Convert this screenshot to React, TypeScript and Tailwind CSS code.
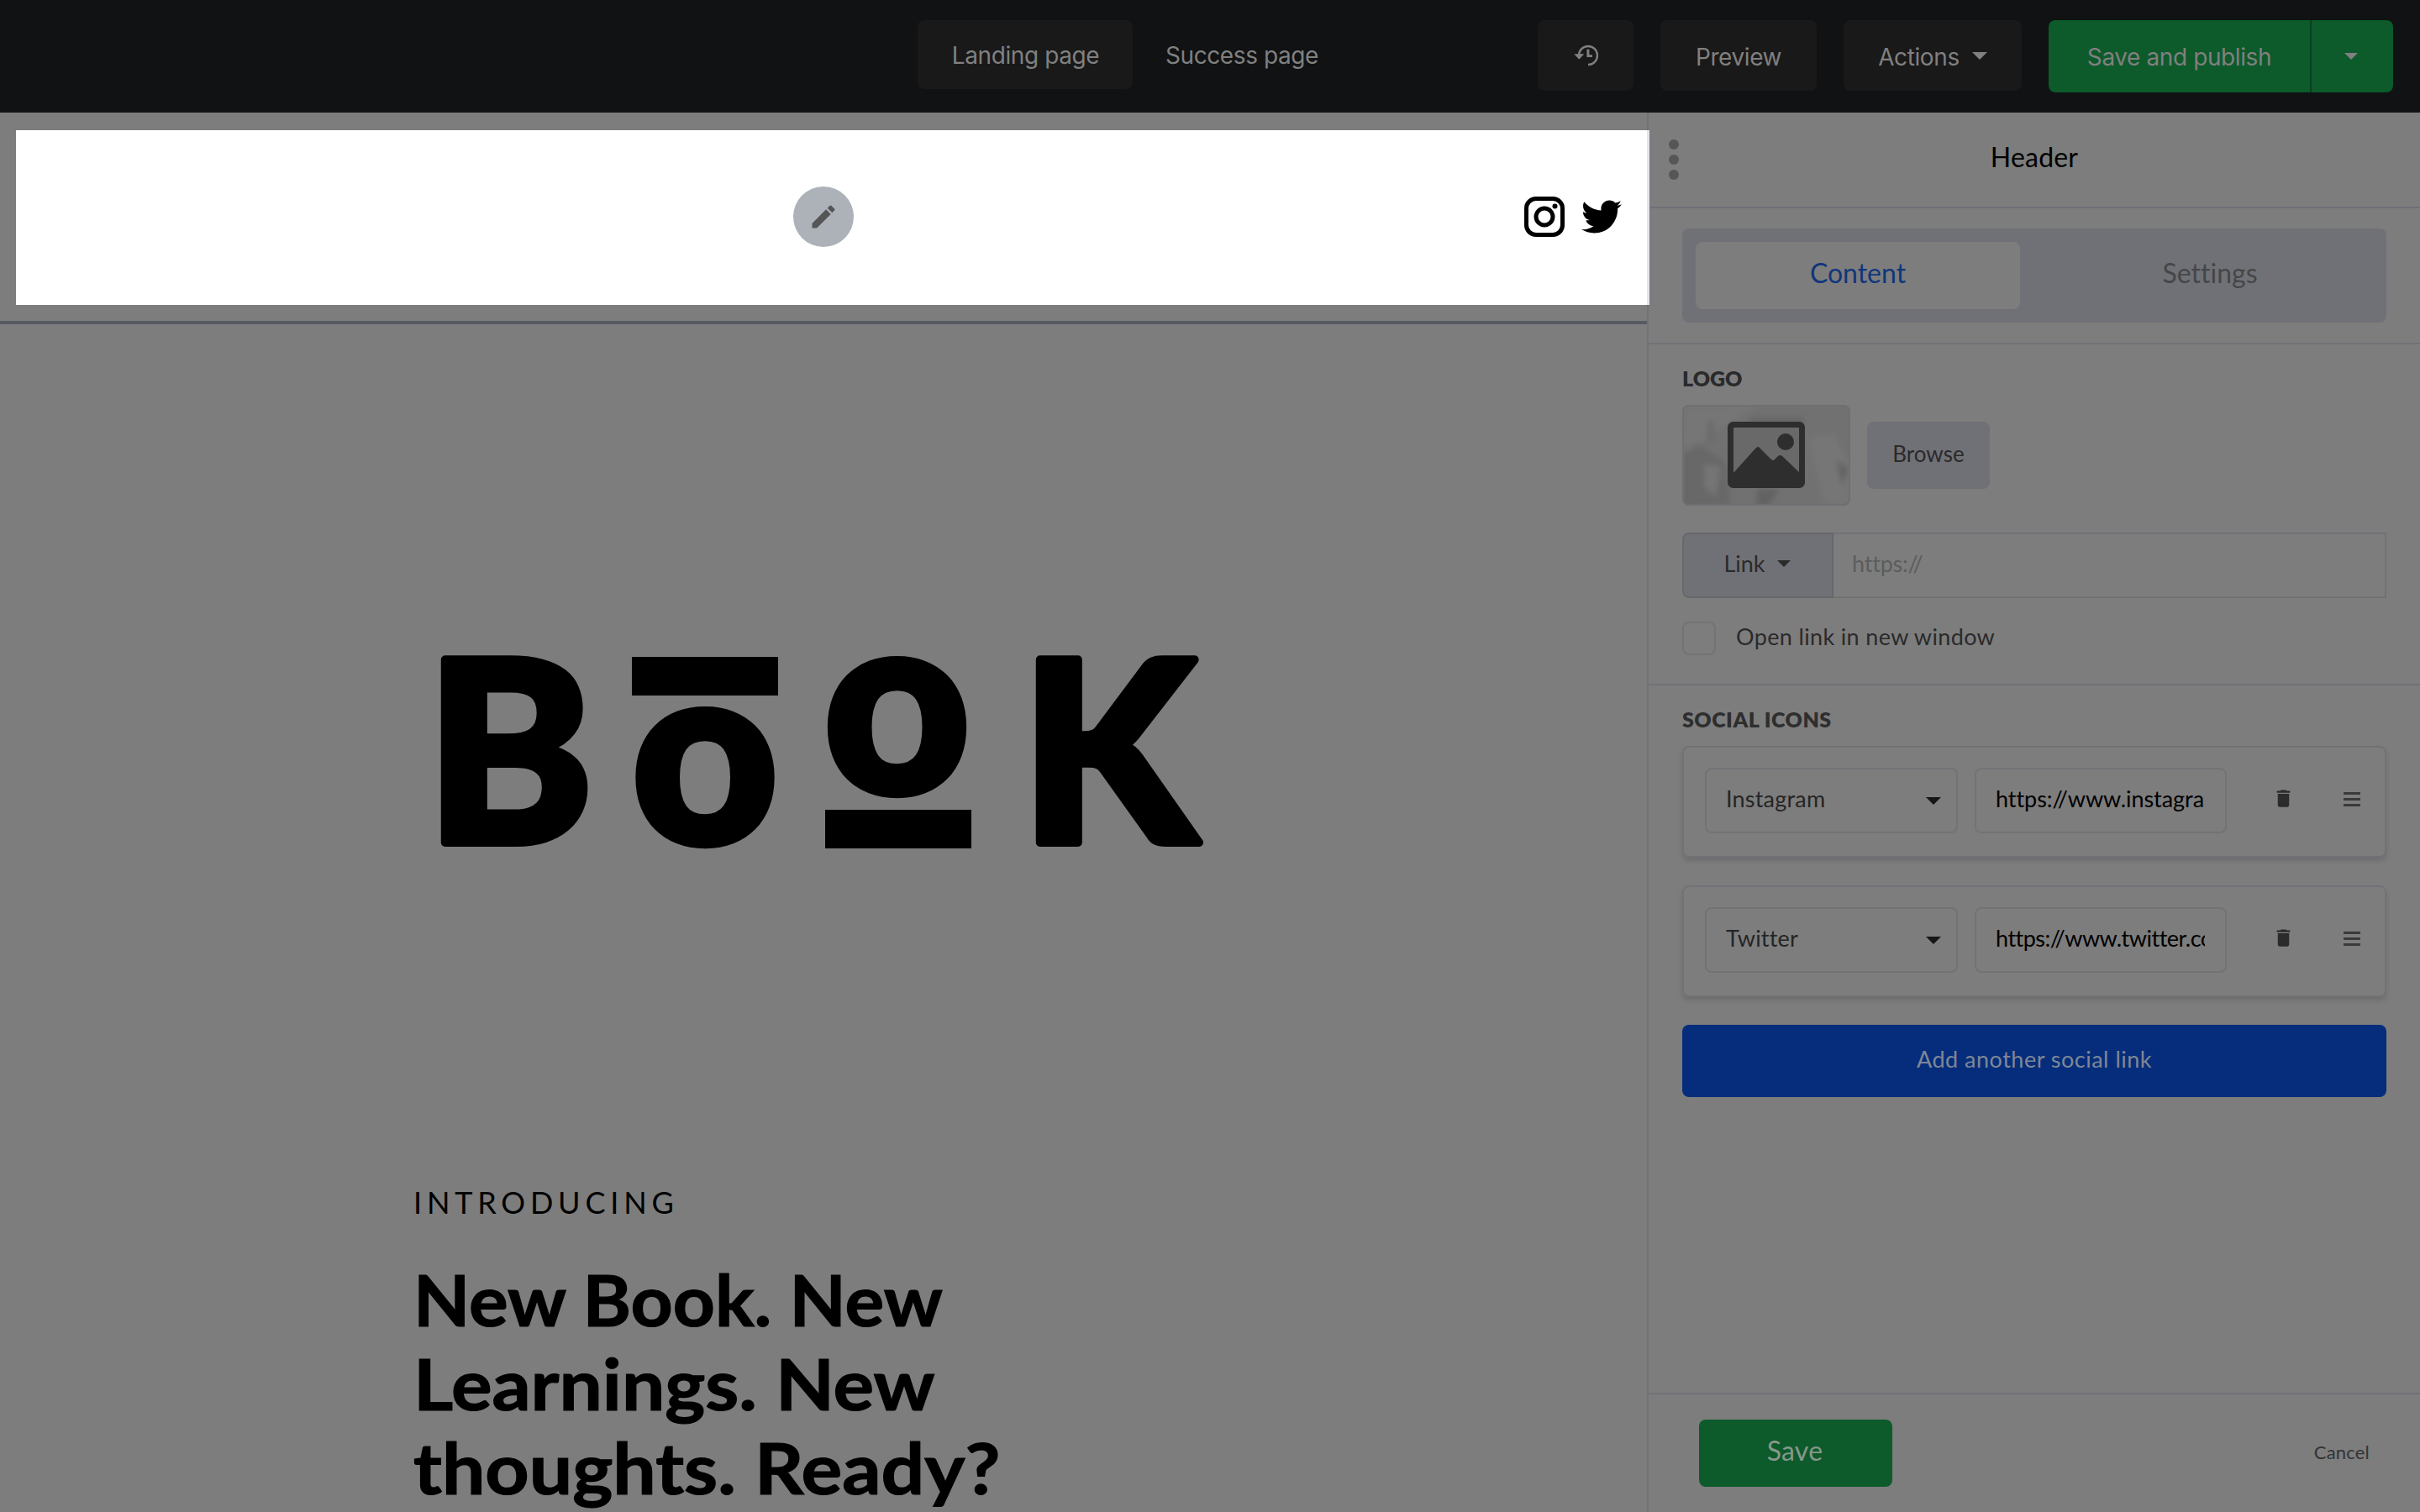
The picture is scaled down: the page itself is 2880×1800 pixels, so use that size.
import React from "react";
import { MdDelete, MdEdit } from "react-icons/md";
import { FaTwitter } from "react-icons/fa";

const socialLinks = [
  { name: "Instagram", url: "https://www.instagra", spacing: "tracking-[-0.05px]" },
  { name: "Twitter", url: "https://www.twitter.co", spacing: "tracking-[-0.5px]" },
];

const Caret = ({ className }: { className: string }) => (
  <svg viewBox="0 0 18 9" className={className} fill="currentColor" preserveAspectRatio="none">
    <path d="M0 0h18l-9 9z" />
  </svg>
);

const HistoryIcon = () => (
  <svg viewBox="0 0 29 26" className="h-[26px] w-[29px]" fill="currentColor">
    <path d="M6 13a11 11 0 1 1 11 11" fill="none" stroke="currentColor" strokeWidth="2.4" />
    <path d="M.3 11.3h12l-6 6.4z" />
    <path d="M15.4 5.7h3v6.5H22V15h-6.6z" />
  </svg>
);

const InstagramIcon = () => (
  <svg viewBox="0 0 48 48" className="mb-0.5 size-12" fill="none" stroke="#000">
    <rect x="2.5" y="2.5" width="43" height="43" rx="11.5" strokeWidth="5" />
    <circle cx="24" cy="24" r="10" strokeWidth="5" />
    <circle cx="36.5" cy="11.5" r="3" fill="#000" stroke="none" />
  </svg>
);

const TopBar = () => (
  <header className="flex h-[134px] shrink-0 items-start bg-[#101213] pt-6 pr-8 font-['Inter',sans-serif] text-[28px] tracking-[-0.4px] text-[#808080]">
    <nav className="ml-[1092px] flex h-[82px]">
      <a className="flex w-64 items-center justify-center rounded-lg bg-[#191919] pt-0.5 pl-px">
        Landing page
      </a>
      <a className="flex w-64 items-center justify-center pt-0.5 pl-1">Success page</a>
    </nav>
    <div className="ml-auto flex h-[86px]">
      <button className="mr-8 flex h-[84px] w-[114px] items-center justify-center rounded-lg bg-[#191919]">
        <HistoryIcon />
      </button>
      <button className="mr-8 h-[84px] w-[186px] rounded-lg bg-[#191919] pt-1">
        Preview
      </button>
      <button className="mr-8 flex h-[84px] w-[212px] items-center justify-center gap-[15px] rounded-lg bg-[#191919] pt-1">
        Actions
        <Caret className="mb-1 h-[9px] w-[18px]" />
      </button>
      <button className="w-[311px] rounded-l-lg bg-[#0d5a2b] pt-0.5">Save and publish</button>
      <button className="flex w-[99px] items-center justify-center rounded-r-lg border-l-2 border-[#0a3f20] bg-[#0d5a2b] pr-1">
        <Caret className="h-2 w-4" />
      </button>
    </div>
  </header>
);

const BookLogo = () => (
  <svg
    viewBox="0 0 912 228"
    className="ml-[524px] h-[228px] w-[912px] overflow-visible font-['Lato',sans-serif] text-[300px] font-black"
    stroke="#000"
    strokeWidth="10"
    strokeLinejoin="round"
  >
    <text x="-17" y="221">B</text>
    <text x="315" y="221" textAnchor="middle">o</text>
    <text x="543.5" y="161" textAnchor="middle">o</text>
    <text x="691" y="221">K</text>
    <g stroke="none">
      <rect x="228" width="174" height="46" />
      <rect x="458" y="182" width="174" height="46" />
    </g>
  </svg>
);

const Canvas = () => (
  <main className="flex w-[1960px] shrink-0 flex-col overflow-visible text-black">
    <section className="h-[252px] shrink-0 border-b-4 border-[#565b61] pt-[21px] pl-[19px]">
      <div className="relative z-10 flex h-[208px] w-[1944px] items-center justify-end gap-5 border-r-[3px] border-[#e4e4ec] bg-white pr-[30px]">
        <button className="absolute top-[67px] left-[925px] flex size-[72px] items-center justify-center rounded-full bg-[#adb2b9] text-[#555]">
          <MdEdit className="size-9" />
        </button>
        <InstagramIcon />
        <FaTwitter className="mb-0.5 size-12" />
      </div>
    </section>
    <section className="pt-[396px]">
      <BookLogo />
      <div className="ml-[492px] w-[720px] pt-[396px] font-['Lato',sans-serif]">
        <p className="text-4xl leading-[50px] tracking-[5.8px]">INTRODUCING</p>
        <h1 className="mt-10 flex flex-col items-start text-[85px] leading-[100px] font-bold whitespace-nowrap [-webkit-text-stroke:1.2px_#000]">
          <span className="origin-left scale-x-[1.028]">New Book. New</span>
          <span className="origin-left scale-x-[1.07]">Learnings. New</span>
          <span className="origin-left scale-x-[1.073]">thoughts. Ready?</span>
        </h1>
      </div>
    </section>
  </main>
);

const Thumbnail = () => (
  <svg viewBox="0 0 200 120" className="h-[120px] w-[200px]">
    <defs>
      <clipPath id="thumb">
        <rect width="200" height="120" rx="8" />
      </clipPath>
      <filter id="soft">
        <feGaussianBlur stdDeviation="3" />
      </filter>
    </defs>
    <g clipPath="url(#thumb)">
      <rect width="200" height="120" fill="#717171" />
      <g filter="url(#soft)">
        <path d="M0 0h90L20 45 0 50z" fill="#767676" />
        <path d="M80 14h64v14H80zM0 60l20-12 32 20 6 52H0z" fill="#686868" />
        <path d="M26 70l20 4-6 36-14-12z" fill="#747474" />
        <path d="M150 40l30-6 20 40v46h-30z" fill="#767676" />
        <path d="M184 66l14 10-8 20zM90 100h26l-14 20H88z" fill="#626262" />
        <path d="M30 20h8v24h-8z" fill="#6b6b6b" />
      </g>
      <path d="M58 24h86v60H58z" fill="#696969" />
    </g>
    <rect x="1" y="1" width="198" height="118" rx="7" fill="none" stroke="#6e6f73" strokeWidth="2" />
    <rect x="57.5" y="23.5" width="85" height="72" rx="3" fill="none" stroke="#2e2e2e" strokeWidth="7" />
    <circle cx="123" cy="44" r="10" fill="#2e2e2e" />
    <path
      d="M60 96V82L87 52q3-4 6 0l13 13q2 2 4 0l4-4q2-2 5 0l22 21v14z"
      fill="#2e2e2e"
    />
  </svg>
);

const SocialCard = ({ name, url, spacing }: { name: string; url: string; spacing: string }) => (
  <div className="mb-[33px] flex h-[133px] rounded-lg border-2 border-[#717276] pt-6 pl-[25px] shadow-[0_4px_6px_rgba(0,0,0,0.13)]">
    <div className="flex h-[78px] w-[301px] items-center justify-between rounded-lg border-2 border-[#727376] pr-[18px] pb-1 pl-[23px] text-[27px] tracking-[0.2px] text-[#252525]">
      {name}
      <Caret className="mt-1 h-[9px] w-[18px] text-[#161616]" />
    </div>
    <div className="ml-5 flex h-[78px] w-[300px] items-center rounded-lg border-2 border-[#727376] pr-6 pb-1 pl-[23px] text-[27px] text-black">
      <span className={`w-full overflow-hidden whitespace-nowrap ${spacing}`}>{url}</span>
    </div>
    <MdDelete className="mt-[23px] ml-[54px] size-[27px] text-[#2b2b2b]" />
    <div className="mt-[29px] ml-[58px] flex flex-col gap-1">
      <i className="h-[3px] w-5 bg-[#3a3a3a]" />
      <i className="h-[3px] w-5 bg-[#3a3a3a]" />
      <i className="h-[3px] w-5 bg-[#3a3a3a]" />
    </div>
  </div>
);

const Sidebar = () => (
  <aside className="flex flex-1 flex-col border-l-2 border-[#727377] font-['Lato',sans-serif] [font-variant-ligatures:none]">
    <div className="flex h-[114px] shrink-0 items-center border-b-2 border-[#6f7076] pl-6 text-[32px] text-black">
      <div className="flex w-3 flex-col gap-1.5">
        <i className="size-3 rounded-full bg-[#565656]" />
        <i className="size-3 rounded-full bg-[#565656]" />
        <i className="size-3 rounded-full bg-[#565656]" />
      </div>
      <h2 className="flex-1 pr-9 pb-1.5 text-center tracking-[0.2px]">Header</h2>
    </div>

    <div className="h-[162px] shrink-0 border-b-2 border-[#707176] px-10 pt-6">
      <div className="flex h-28 rounded-lg bg-[#707176] p-4 text-[32px]">
        <button className="w-[386px] rounded-lg bg-[#7d7d7d] pb-1.5 text-[#10367b]">
          Content
        </button>
        <button className="flex-1 pb-1.5 pl-8 text-[#454648]">Settings</button>
      </div>
    </div>

    <div className="h-[406px] shrink-0 border-b-2 border-[#707176] px-10 pt-6 text-[#2a2a2b]">
      <h3 className="text-[25px] leading-8 font-extrabold">LOGO</h3>
      <div className="mt-4 flex h-[120px] items-center gap-5">
        <Thumbnail />
        <button className="h-20 w-[146px] rounded-lg bg-[#707176] pb-1 text-[26px]">
          Browse
        </button>
      </div>
      <div className="mt-8 flex h-[78px] text-[27px]">
        <button className="flex w-[180px] items-center justify-center gap-[14px] rounded-l-lg border-2 border-[#66686b] bg-[#707176] pr-0.5 pb-1">
          Link
          <Caret className="h-2 w-4" />
        </button>
        <div className="flex flex-1 items-center border-2 border-l-0 border-[#707276] pb-1 pl-[22px] tracking-[-0.2px] text-[#5c5c5d]">
          https://
        </div>
      </div>
      <label className="mt-7 flex items-center gap-6 text-[27px] leading-[34px] tracking-[0.35px]">
        <span className="size-10 rounded-lg border-2 border-[#727377]" />
        <span className="pb-1">Open link in new window</span>
      </label>
    </div>

    <div className="px-10 pt-6">
      <h3 className="mb-4 text-[25px] leading-8 font-extrabold tracking-[0.5px] text-[#2e2e2e]">SOCIAL ICONS</h3>
      {socialLinks.map((link) => (
        <SocialCard key={link.name} {...link} />
      ))}
      <button className="h-[86px] w-full rounded-lg bg-[#052d7c] pb-1 text-[27px] tracking-[0.5px] text-[#7f8796]">
        Add another social link
      </button>
    </div>

    <div className="mt-auto flex h-[142px] shrink-0 items-start justify-between border-t-2 border-[#707176] px-[60px] pt-[30px]">
      <button className="h-20 w-[230px] rounded-lg bg-[#0d5a2b] pr-0.5 pb-1.5 text-[32px] tracking-[0.2px] text-[#86978b]">
        Save
      </button>
      <button className="h-20 pb-1 text-[22px] tracking-[0.2px] text-[#333]">Cancel</button>
    </div>
  </aside>
);

const App = () => (
  <div className="flex h-[1800px] w-[2880px] flex-col overflow-hidden bg-[#7d7d7d]">
    <TopBar />
    <div className="flex h-[1666px]">
      <Canvas />
      <Sidebar />
    </div>
  </div>
);

export default App;
